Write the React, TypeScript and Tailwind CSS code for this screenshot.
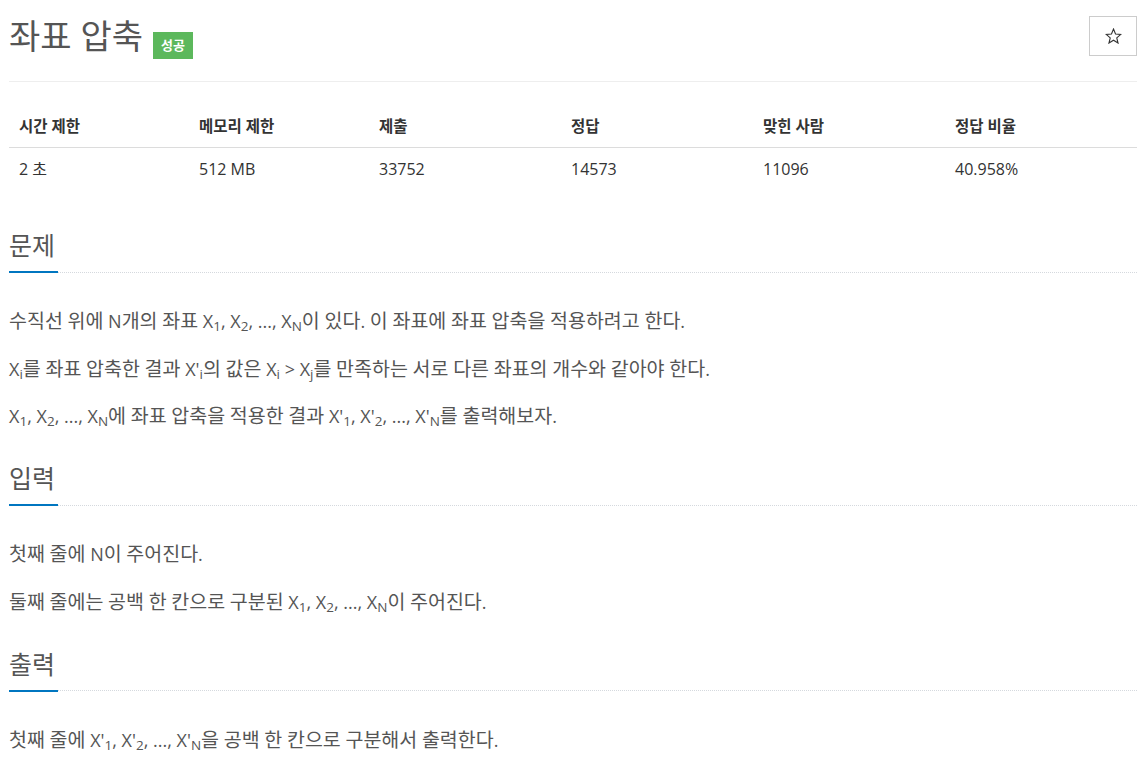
import React from "react";

const FONT = { fontFamily: '"Open Sans", "Noto Sans CJK KR", sans-serif' };

const SPLIT = /([\uAC00-\uD7A3]+)/;
const IS_H = /^[\uAC00-\uD7A3]+$/;

function k(s: string, key: string | number) {
  return s.split(SPLIT).map((part, i) =>
    IS_H.test(part) ? (
      <span key={`${key}-${i}`} className="text-[19.5px] leading-none">
        {part}
      </span>
    ) : (
      <React.Fragment key={`${key}-${i}`}>{part}</React.Fragment>
    )
  );
}

function X({ s, p }: { s: string; p?: boolean }) {
  return (
    <>
      X{p ? "'" : ""}
      <sub>{s}</sub>
    </>
  );
}

function P({ parts }: { parts: (string | React.ReactElement)[] }) {
  return (
    <p>
      {parts.map((p, i) =>
        typeof p === "string" ? k(p, i) : <React.Fragment key={i}>{p}</React.Fragment>
      )}
    </p>
  );
}

function Heading({ children }: { children: React.ReactNode }) {
  return (
    <div>
      <h2 className="text-[25px] leading-[30px] text-[#555]">{children}</h2>
      <div className="mt-[11px] flex h-[2px] items-center">
        <div className="h-[2px] w-[49px] bg-[#0076c0]" />
        <div className="flex-1 border-t border-dotted border-[#d5d9de]" />
      </div>
    </div>
  );
}

const cols = ["w-[180px]", "w-[180px]", "w-[192px]", "w-[192px]", "w-[192px]", "w-[192px]"];
const heads = ["시간 제한", "메모리 제한", "제출", "정답", "맞힌 사람", "정답 비율"];
const vals = ["2 초", "512 MB", "33752", "14573", "11096", "40.958%"];

export default function App() {
  return (
    <div className="w-[1146px] bg-white px-[9px] pb-[30px] text-[#555]" style={FONT}>
      {/* header */}
      <div className="mt-[16px] flex h-[40px] items-center justify-between">
        <div className="flex items-center">
          <h1 className="text-[34px] leading-[36px] text-[#555]">좌표 압축</h1>
          <span className="ml-[10px] mt-[19px] flex h-[27px] items-center bg-[#5cb85c] px-[8px] text-[13px] font-bold text-white">
            성공
          </span>
        </div>
        <button className="flex h-[40px] w-[48px] items-center justify-center border border-[#ccc] bg-white">
          <svg width="17" height="16" viewBox="0 0 24 23" fill="none" stroke="#333" strokeWidth="1.6" strokeLinejoin="miter">
            <polygon points="12,1.5 14.9,8.6 22.5,9.2 16.7,14.2 18.5,21.6 12,17.6 5.5,21.6 7.3,14.2 1.5,9.2 9.1,8.6" />
          </svg>
        </button>
      </div>
      <div className="mt-[25px] border-t border-[#eee]" />

      {/* table */}
      <div className="flex h-[66px] items-end border-b border-[#dcdcdc]">
        {heads.map((h, i) => (
          <div key={i} className={`${cols[i]} pb-[11px] pl-[10px] text-[15.5px] font-bold leading-[20px] text-[#333]`}>
            {h}
          </div>
        ))}
      </div>
      <div className="flex pt-[11px] pb-[11px]">
        {vals.map((v, i) => (
          <div key={i} className={`${cols[i]} pl-[10px] text-[16px] leading-[20px] text-[#333]`}>
            {v}
          </div>
        ))}
      </div>

      {/* 문제 */}
      <div className="mt-[40px]">
        <Heading>문제</Heading>
        <div className="mt-[34px] flex flex-col gap-[19.5px] text-[18px] leading-[28px]">
          <P parts={["수직선 위에 N개의 좌표 ", <X s="1" />, ", ", <X s="2" />, ", ..., ", <X s="N" />, "이 있다. 이 좌표에 좌표 압축을 적용하려고 한다."]} />
          <P parts={[<X s="i" />, "를 좌표 압축한 결과 ", <X s="i" p />, "의 값은 ", <X s="i" />, " > ", <X s="j" />, "를 만족하는 서로 다른 좌표의 개수와 같아야 한다."]} />
          <P parts={[<X s="1" />, ", ", <X s="2" />, ", ..., ", <X s="N" />, "에 좌표 압축을 적용한 결과 ", <X s="1" p />, ", ", <X s="2" p />, ", ..., ", <X s="N" p />, "를 출력해보자."]} />
        </div>
      </div>

      {/* 입력 */}
      <div className="mt-[33px]">
        <Heading>입력</Heading>
        <div className="mt-[34px] flex flex-col gap-[19.5px] text-[18px] leading-[28px]">
          <P parts={["첫째 줄에 N이 주어진다."]} />
          <P parts={["둘째 줄에는 공백 한 칸으로 구분된 ", <X s="1" />, ", ", <X s="2" />, ", ..., ", <X s="N" />, "이 주어진다."]} />
        </div>
      </div>

      {/* 출력 */}
      <div className="mt-[33px]">
        <Heading>출력</Heading>
        <div className="mt-[34px] flex flex-col gap-[19.5px] text-[18px] leading-[28px]">
          <P parts={["첫째 줄에 ", <X s="1" p />, ", ", <X s="2" p />, ", ..., ", <X s="N" p />, "을 공백 한 칸으로 구분해서 출력한다."]} />
        </div>
      </div>
    </div>
  );
}
